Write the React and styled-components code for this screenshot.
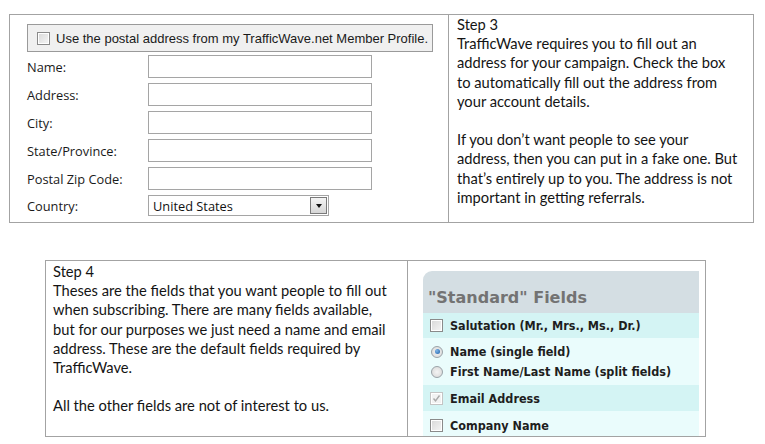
import styled, { createGlobalStyle } from "styled-components";

const Global = createGlobalStyle`
  body {
    margin: 0;
    background: #fff;
    font-family: "Liberation Sans", Arial, sans-serif;
  }
`;

const Page = styled.div`
  width: 765px;
  height: 444px;
  overflow: hidden;
`;

const Table = styled.div`
  display: grid;
  grid-template-columns: ${(p) => p.cols};
  border: 1px solid #a3a3a3;
  margin: ${(p) => p.margin};
  width: ${(p) => p.width}px;
  height: ${(p) => p.height}px;
  box-sizing: border-box;
  overflow: hidden;
`;

const Cell = styled.div`
  padding: ${(p) => p.pad};
  border-left: ${(p) => (p.divider ? "1px solid #a3a3a3" : "none")};
  overflow: hidden;
`;

const Prose = styled.div`
  font-family: Lato, "Open Sans", sans-serif;
  font-size: 14.7px;
  line-height: 19.2px;
  color: #141414;
  white-space: nowrap;
  p {
    margin: 0;
  }
`;

const Blank = styled.div`
  height: 19.2px;
`;

const ProfileBox = styled.label`
  display: flex;
  align-items: center;
  gap: 6px;
  height: 28px;
  box-sizing: border-box;
  border: 1px solid #9a9a9a;
  background: #f0f0f0;
  padding-left: 9px;
  font-family: "Liberation Sans", Arial, sans-serif;
  font-size: 13px;
  color: #1a1a1a;
  margin-bottom: 3px;
  width: 406px;
`;

const Box = styled.span`
  display: inline-block;
  width: 11px;
  height: 11px;
  border: 1px solid ${(p) => (p.disabled ? "#c4c4c4" : "#8a8a8a")};
  background: ${(p) => (p.disabled ? "#f2f2f2" : "linear-gradient(135deg, #d8d8d8, #f6f6f6)")};
  box-shadow: inset 0 0 0 1px #fff;
  flex: none;
  position: relative;
`;

const FormRow = styled.div`
  display: grid;
  grid-template-columns: 121px auto;
  align-items: center;
  margin-bottom: 5px;
  font-family: "Open Sans", sans-serif;
  font-size: 12.8px;
  color: #1a1a1a;
`;

const Input = styled.div`
  width: 224px;
  height: 23px;
  box-sizing: border-box;
  border: 1px solid #a5a5a5;
  background: #fff;
`;

const Select = styled.div`
  width: 181px;
  height: 21px;
  box-sizing: border-box;
  border: 1px solid #a5a5a5;
  display: flex;
  align-items: center;
  justify-content: space-between;
  padding-left: 4px;
  padding-right: 1px;
  font-family: "Open Sans", sans-serif;
  font-size: 12.8px;
  color: #111;
`;

const DropBtn = styled.span`
  width: 15px;
  height: 15px;
  border: 1px solid #7a7a7a;
  background: linear-gradient(#f4f4f4, #d6d6d6);
  display: flex;
  align-items: center;
  justify-content: center;
  &::after {
    content: "";
    border-left: 3.5px solid transparent;
    border-right: 3.5px solid transparent;
    border-top: 4px solid #111;
  }
`;

const Panel = styled.div`
  width: 276px;
  border-top-left-radius: 9px;
  overflow: hidden;
  font-family: "DejaVu Sans Condensed", "DejaVu Sans", sans-serif;
`;

const PanelHead = styled.div`
  height: 42px;
  background: #d4dee3;
  display: flex;
  align-items: flex-end;
  padding: 0 0 6px 5px;
  box-sizing: border-box;
  font-family: "DejaVu Sans", sans-serif;
  font-size: 16px;
  font-weight: bold;
  color: #737373;
`;

const FieldRow = styled.div`
  background: ${(p) => (p.dark ? "#d4f4f4" : "#eafcfc")};
  padding: ${(p) => p.pad || "0"} 0 ${(p) => p.pad || "0"} 7px;
  height: ${(p) => p.h}px;
  box-sizing: border-box;
  display: flex;
  flex-direction: column;
  justify-content: center;
`;

const FieldLine = styled.label`
  display: flex;
  align-items: center;
  gap: 7px;
  height: 20px;
  font-size: 12.5px;
  font-weight: bold;
  color: #1e1e1e;
`;

const Radio = styled.span`
  width: 10px;
  height: 10px;
  border-radius: 50%;
  border: 1px solid #9aa2a8;
  background: radial-gradient(circle, #f4f4f4, #d6d6d6);
  flex: none;
  display: flex;
  align-items: center;
  justify-content: center;
  margin-left: 1px;
  &::after {
    content: "";
    display: ${(p) => (p.on ? "block" : "none")};
    width: 5px;
    height: 5px;
    border-radius: 50%;
    background: radial-gradient(circle at 35% 35%, #7fb6e8, #1e5fa8);
  }
`;

const Tick = () => (
  <svg width="9" height="9" viewBox="0 0 9 9" style={{ position: "absolute", left: 1, top: 1 }}>
    <path d="M1.5 4.5 L3.5 6.8 L7.5 1.5" fill="none" stroke="#a9a9a9" strokeWidth="1.4" />
  </svg>
);

const rows = [
  ["Name:", <Input />],
  ["Address:", <Input />],
  ["City:", <Input />],
  ["State/Province:", <Input />],
  ["Postal Zip Code:", <Input />],
  [
    "Country:",
    <Select>
      United States
      <DropBtn />
    </Select>,
  ],
];

export default function App() {
  return (
    <Page>
      <Global />
      <Table cols="438px 1fr" margin="14px 0 0 9px" width={745} height={209}>
        <Cell pad="9px 0 0 17px">
          <ProfileBox>
            <Box />
            Use the postal address from my TrafficWave.net Member Profile.
          </ProfileBox>
          {rows.map(([label, field]) => (
            <FormRow key={label}>
              <span>{label}</span>
              {field}
            </FormRow>
          ))}
        </Cell>
        <Cell divider pad="0 0 0 8px">
          <Prose>
            <p>Step 3</p>
            <p>
              TrafficWave requires you to fill out an
              <br />
              address for your campaign. Check the box
              <br />
              to automatically fill out the address from
              <br />
              your account details.
            </p>
            <Blank />
            <p>
              If you don’t want people to see your
              <br />
              address, then you can put in a fake one. But
              <br />
              that’s entirely up to you. The address is not
              <br />
              important in getting referrals.
            </p>
          </Prose>
        </Cell>
      </Table>
      <Table cols="361px 1fr" margin="37px 0 0 45px" width={661} height={177}>
        <Cell pad="1px 0 0 7px">
          <Prose>
            <p>Step 4</p>
            <p>
              Theses are the fields that you want people to fill out
              <br />
              when subscribing. There are many fields available,
              <br />
              but for our purposes we just need a name and email
              <br />
              address. These are the default fields required by
              <br />
              TrafficWave.
            </p>
            <Blank />
            <p>All the other fields are not of interest to us.</p>
          </Prose>
        </Cell>
        <Cell divider pad="10px 0 0 15px">
          <Panel>
            <PanelHead>"Standard" Fields</PanelHead>
            <FieldRow dark h={25}>
              <FieldLine>
                <Box />
                Salutation (Mr., Mrs., Ms., Dr.)
              </FieldLine>
            </FieldRow>
            <FieldRow h={47} pad="2px">
              <FieldLine>
                <Radio on />
                Name (single field)
              </FieldLine>
              <FieldLine>
                <Radio />
                First Name/Last Name (split fields)
              </FieldLine>
            </FieldRow>
            <FieldRow dark h={26}>
              <FieldLine>
                <Box disabled>
                  <Tick />
                </Box>
                Email Address
              </FieldLine>
            </FieldRow>
            <FieldRow h={28}>
              <FieldLine>
                <Box />
                Company Name
              </FieldLine>
            </FieldRow>
          </Panel>
        </Cell>
      </Table>
    </Page>
  );
}
